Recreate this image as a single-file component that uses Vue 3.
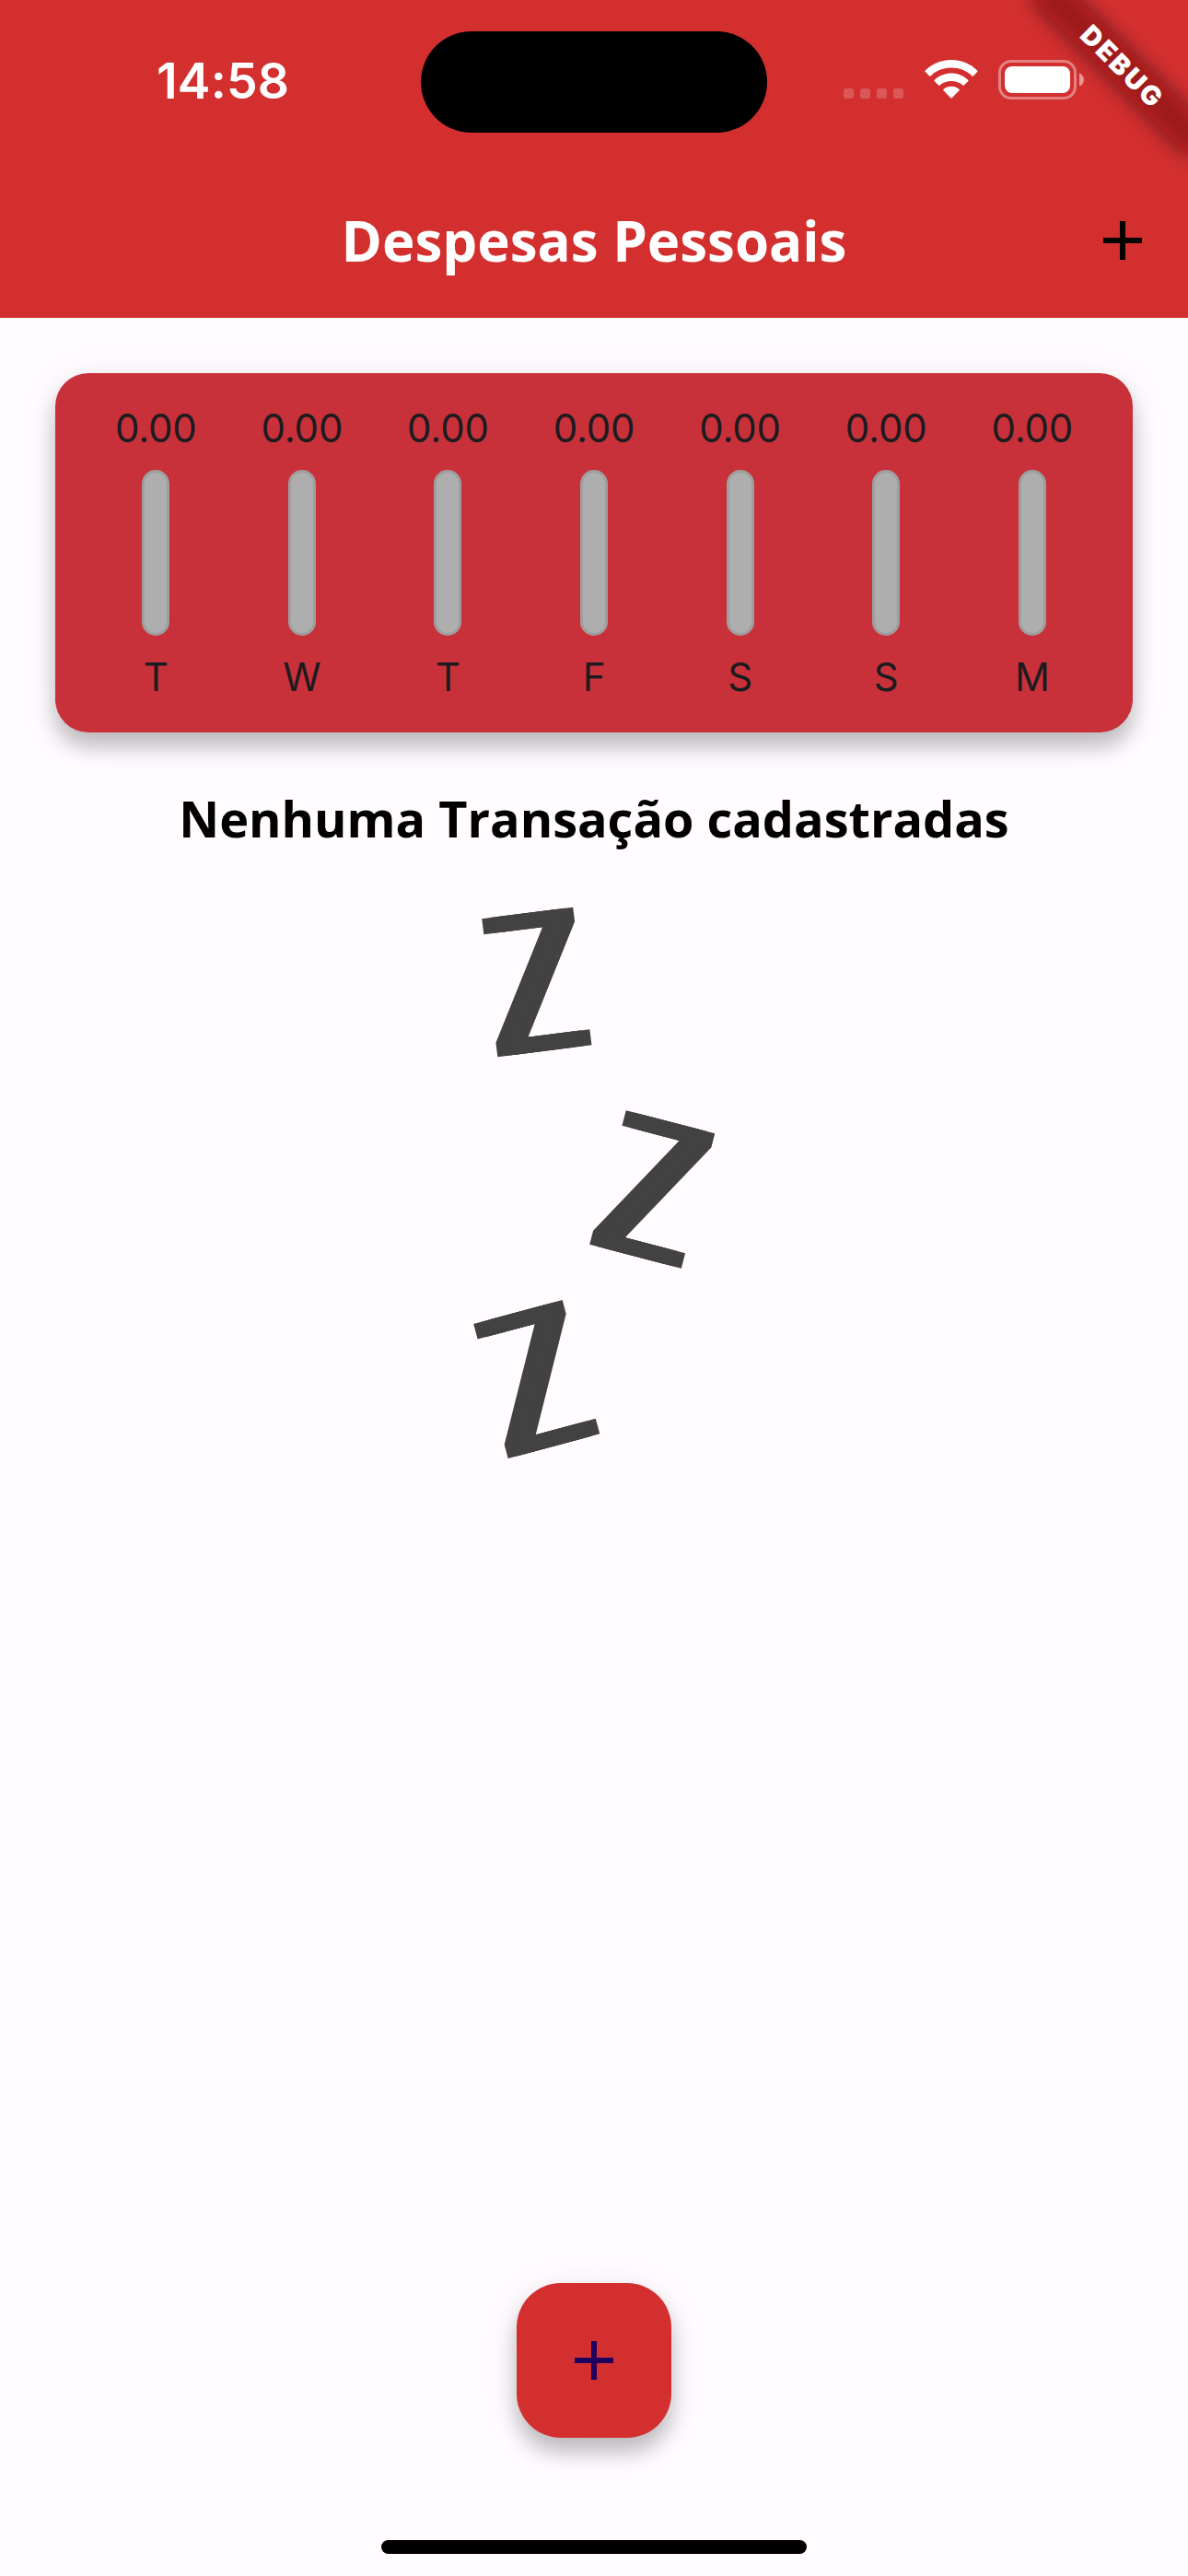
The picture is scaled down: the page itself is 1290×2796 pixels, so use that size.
<script setup>
const days = ['T', 'W', 'T', 'F', 'S', 'S', 'M'].map((label) => ({ label, value: 0 }))

const zs = [
  { x: 81.6, y: 81, angle: -7.15 },
  { x: 208.9, y: 306.4, angle: 14.6 },
  { x: 82, y: 512, angle: -15 },
]
</script>

<template>
  <div class="screen">
    <header class="top">
      <div class="status">
        <div class="clock">14:58</div>
        <div class="island"></div>
        <div class="indicators">
          <div class="signal"><i v-for="n in 4" :key="n"></i></div>
          <svg class="wifi" width="58" height="42" viewBox="0 0 58 42" fill="#fff">
            <path d="M29 0C39.800 0 49.900 4.100 57.200 11.600Q57.900 12.400 57.200 13.100L52.800 17.500Q52.200 18 51.500 17.400C45.500 11.700 37.600 8.600 29 8.600S12.500 11.700 6.500 17.400Q5.800 18 5.200 17.500L.8 13.100Q.1 12.400.8 11.600C8.100 4.100 18.200 0 29 0Z" />
            <path d="M29 14.400C36 14.400 42.500 17.100 47.200 21.700Q48 22.500 47.200 23.200L42.800 27.600Q42.200 28.200 41.500 27.600C38.200 24.600 33.800 23 29 23S19.800 24.600 16.500 27.600Q15.800 28.200 15.200 27.600L10.800 23.200Q10 22.500 10.800 21.700C15.500 17.100 22 14.400 29 14.400Z" />
            <path d="M29 28.700C32.200 28.700 35.200 29.800 37.400 31.700Q38.200 32.500 37.500 33.200L29.700 41.200Q29 41.900 28.300 41.200L20.500 33.200Q19.800 32.500 20.600 31.700C22.800 29.800 25.800 28.700 29 28.700Z" />
          </svg>
          <svg class="battery" width="93" height="43" viewBox="0 0 93 43">
            <rect x="1.500" y="1.500" width="82" height="40" rx="12.500" fill="none" stroke="#fff" stroke-opacity=".4" stroke-width="3" />
            <rect x="7" y="7" width="71" height="29" rx="8" fill="#fff" />
            <path d="M88 14.500C91 15.500 93 18.200 93 21.500S91 27.500 88 28.500Z" fill="#fff" fill-opacity=".5" />
          </svg>
        </div>
      </div>
      <div class="appbar">
        <h1>Despesas Pessoais</h1>
        <button class="action" aria-label="Adicionar">
          <svg width="72" height="72" viewBox="0 0 24 24"><path d="M19 13h-6v6h-2v-6H5v-2h6V5h2v6h6v2z" /></svg>
        </button>
      </div>
    </header>

    <main>
      <section class="chart">
        <div v-for="(day, i) in days" :key="i" class="day">
          <span class="value">{{ day.value.toFixed(2) }}</span>
          <div class="bar"></div>
          <span class="label">{{ day.label }}</span>
        </div>
      </section>
      <h2>Nenhuma Transação cadastradas</h2>
      <div class="sleep">
        <span
          v-for="(z, i) in zs"
          :key="i"
          class="z"
          :style="{ left: z.x + 'px', top: z.y + 'px', '--angle': z.angle + 'deg' }"
        >Z</span>
      </div>
    </main>

    <footer>
      <button class="fab" aria-label="Adicionar">
        <svg width="72" height="72" viewBox="0 0 24 24"><path d="M19 13h-6v6h-2v-6H5v-2h6V5h2v6h6v2z" /></svg>
      </button>
      <div class="home"></div>
    </footer>

    <div class="banner"><b>DEBUG</b></div>
  </div>
</template>

<style>
body {
  margin: 0;
  background: #fffbff;
}
</style>

<style scoped>
.screen {
  position: relative;
  display: flex;
  flex-direction: column;
  width: 1290px;
  height: 2796px;
  overflow: hidden;
  background: #fffbff;
  font-family: Inter, 'Liberation Sans', sans-serif;
}
button {
  display: flex;
  align-items: center;
  justify-content: center;
  padding: 0;
  border: 0;
  background: none;
}
.top {
  height: 345px;
  background: #d32f2f;
}
.status {
  display: grid;
  grid-template-columns: 457px 376px 457px;
  height: 177px;
}
.clock {
  padding: 56px 0 0 170px;
  color: #fff;
  font-size: 53.5px;
  font-weight: 600;
  line-height: 64px;
  letter-spacing: 0.2px;
}
.island {
  height: 110px;
  margin-top: 34px;
  border-radius: 55px;
  background: #000;
}
.indicators {
  display: flex;
  align-items: flex-start;
  padding: 65px 0 0 83px;
}
.signal {
  display: flex;
  gap: 7px;
  margin: 31px 23px 0 0;
}
.signal i {
  width: 11px;
  height: 11px;
  border-radius: 3px;
  background: rgba(255, 255, 255, 0.2);
}
.battery {
  margin-left: 22px;
}
.appbar {
  display: grid;
  grid-template-columns: 143px 1fr 143px;
  align-items: center;
  height: 168px;
}
h1 {
  grid-column: 2;
  margin: 0;
  color: #fff;
  font: 700 60px/82px 'Open Sans', sans-serif;
  text-align: center;
  white-space: nowrap;
}
main {
  display: flex;
  flex-direction: column;
  align-items: center;
}
.chart {
  display: flex;
  box-sizing: border-box;
  width: 1170px;
  height: 390px;
  margin-top: 60px;
  padding: 30px;
  border-radius: 36px;
  background: #c8313a;
  box-shadow: 0 16px 22px rgba(0, 0, 0, 0.22), 0 6px 40px rgba(0, 0, 0, 0.08);
}
.day {
  display: flex;
  flex: 1;
  flex-direction: column;
  align-items: center;
  color: #1c1b1f;
  font-size: 42px;
  font-weight: 400;
  line-height: 60px;
  letter-spacing: -0.2px;
}
.bar {
  box-sizing: border-box;
  width: 30px;
  height: 180px;
  margin: 15px 0;
  border: 3px solid #9e9e9e;
  border-radius: 15px;
  background: #aeaeae;
}
h2 {
  margin: 56px 0 0;
  color: #000;
  font: 700 54px/74px 'Open Sans', sans-serif;
  white-space: nowrap;
}
.sleep {
  position: relative;
  width: 290px;
  height: 600px;
  margin-top: 60px;
}
.z {
  position: absolute;
  color: #424242;
  font: 207px/1 'DejaVu Sans', sans-serif;
  text-shadow: 13px 0 #424242, -13px 0 #424242;
  transform: translate(-50%, -48.15%) rotate(var(--angle)) scaleX(0.69);
  transform-origin: 50% 48.15%;
}
footer {
  display: flex;
  flex-direction: column;
  align-items: center;
  margin-top: auto;
}
.fab {
  width: 168px;
  height: 168px;
  border-radius: 48px;
  background: #d32f2f;
  fill: #21005d;
  box-shadow: 0 16px 22px rgba(0, 0, 0, 0.22), 0 6px 40px rgba(0, 0, 0, 0.08);
}
.home {
  width: 462px;
  height: 15px;
  margin: 111px 0 24px;
  border-radius: 8px;
  background: #000;
}
.banner {
  position: absolute;
  top: 84px;
  left: 1170px;
  display: flex;
  align-items: center;
  justify-content: center;
  width: 240px;
  height: 36px;
  transform: rotate(45deg);
  transform-origin: 120px -84px;
}
.banner::before,
.banner::after {
  position: absolute;
  inset: 0;
  content: '';
}
.banner::before {
  background: rgba(0, 0, 0, 0.5);
  filter: blur(11px);
}
.banner::after {
  background: rgba(183, 28, 28, 0.63);
}
.banner b {
  position: relative;
  z-index: 1;
  padding-left: 2px;
  color: #fff;
  font-size: 29px;
  font-weight: 900;
  line-height: 36px;
  letter-spacing: 2.6px;
}
</style>
